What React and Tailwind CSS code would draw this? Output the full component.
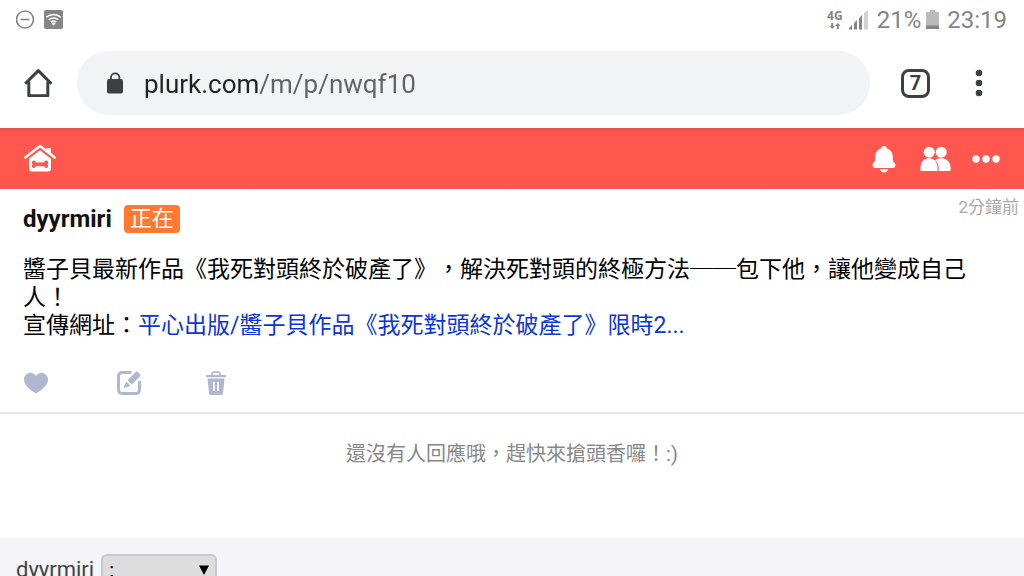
import React from 'react';

function StatusBar() {
  return (
    <div className="flex h-10 shrink-0 items-center justify-between pl-4 pr-[17px] text-[#858585]">
      <div className="flex items-center gap-2">
        {/* Do not disturb */}
        <svg className="h-5 w-5" viewBox="0 0 20 20" fill="none" stroke="currentColor">
          <circle cx="9" cy="9.5" r="8.5" strokeWidth="1.6" />
          <path d="M4.500 9.500h9" strokeWidth="1.6" />
        </svg>
        {/* Wi-Fi */}
        <svg className="h-5 w-5" viewBox="0 0 20 20" fill="none">
          <rect x="0" y="0" width="19" height="19" rx="2" fill="currentColor" />
          <g stroke="#fff" strokeWidth="1.5">
            <path d="M2.2 7.2a11 11 0 0 1 14.6 0" />
            <path d="M4.7 9.7a7.3 7.3 0 0 1 9.6 0" />
            <path d="M6.8 12.2a4.2 4.2 0 0 1 5.4 0" />
          </g>
          <path d="M9.5 15.8l-2-2.3a3 3 0 0 1 4 0z" fill="#fff" />
        </svg>
      </div>
      <div className="flex items-center">
        <div className="flex flex-col items-center">
          <span className="font-['Noto_Sans'] text-xs font-bold leading-3">4G</span>
          <svg className="h-2 w-3" viewBox="0 0 12 8" fill="currentColor">
            <path d="M2.2 1h2v3h1.800L3.200 7 .4 4h1.800z" />
            <path d="M7.800 7h2V4h1.800L8.800 1 6 4h1.800z" />
          </svg>
        </div>
        <svg className="ml-1.5 h-5 w-5" viewBox="0 0 20 20" fill="currentColor">
          <path d="M0 19.5v-1.3L3 15v4.5z" />
          <path d="M5 13.2L8 10v9.5H5z" />
          <path d="M10 8.2L13 5v14.5h-3z" />
          <path d="M15 3.2L19 0v19.5h-4z" fill="#d2d2d2" />
        </svg>
        <span className="ml-2 text-2xl">21%</span>
        <svg className="ml-1 h-5 w-4" viewBox="0 0 16 20">
          <path d="M5 0h5v2h4v14H1V2h4z" fill="#bababa" />
          <path d="M1 15.5h13V19H1z" fill="#858585" />
        </svg>
        <span className="ml-1.5 text-2xl">23:19</span>
      </div>
    </div>
  );
}

function BrowserBar() {
  return (
    <div className="flex h-22 shrink-0 items-center pb-1.5 pl-6 pr-[35px] pt-1">
      <button type="button" aria-label="Home">
        <svg className="h-7 w-7" viewBox="0 0 28 28" fill="none" stroke="#3c4043" strokeWidth="3" strokeLinejoin="round">
          <path d="M1.2 14.8L14.3 1.6l13.1 13.2" />
          <path d="M4.8 12.5v14.2h19V12.5" />
        </svg>
      </button>
      <div className="ml-[25px] flex h-16 flex-1 items-center rounded-full bg-[#f1f3f4] pl-[30px]">
        <svg className="h-6 w-4" viewBox="0 0 16 24">
          <path d="M4 9V6.500a4.200 4.200 0 0 1 8.400 0V9" fill="none" stroke="#3c4043" strokeWidth="1.8" />
          <rect x="0" y="8" width="16" height="14.5" rx="2" fill="#3c4043" />
        </svg>
        {/* the host is darker than the path */}
        <input
          type="text"
          aria-label="Address"
          defaultValue="plurk.com/m/p/nwqf10"
          className="ml-[21px] h-10 min-w-0 flex-1 bg-[linear-gradient(to_right,#202124_115px,#5f6368_115px)] bg-clip-text pt-0.5 text-[26px] leading-8 text-transparent outline-none"
        />
      </div>
      <button
        type="button"
        aria-label="Tabs"
        className="ml-[31px] flex h-[29px] w-[29px] items-center justify-center rounded-lg border-3 border-[#3c4043] text-xl font-bold leading-none text-[#3c4043]"
      >
        7
      </button>
      <button type="button" aria-label="Menu" className="ml-[39px]">
        <svg className="h-7 w-5" viewBox="0 0 20 28" fill="#3c4043">
          <circle cx="10" cy="4" r="3.3" />
          <circle cx="10" cy="14" r="3.3" />
          <circle cx="10" cy="24" r="3.3" />
        </svg>
      </button>
    </div>
  );
}

function SiteNav() {
  return (
    <nav className="flex h-[61px] shrink-0 items-center justify-between bg-linear-to-b from-[#e2524a] to-[#ff574d] to-10% pl-6 pr-6 text-white">
      <a href="#home" aria-label="Plurk">
        <svg className="h-8 w-8" viewBox="0 0 32 32" fill="currentColor">
          <path d="M1.3 14.500L16 3l14.700 11.500" fill="none" stroke="currentColor" strokeWidth="2.4" strokeLinecap="round" strokeLinejoin="round" />
          <path d="M22.600 5h4.200v6.500l-4.200-3.400z" />
          <path d="M16 7.200L27 15.800v9.700q0 3-3 3H8q-3 0-3-3v-9.700z" />
          <g fill="#ff574d">
            <circle cx="9.800" cy="19.600" r="2" />
            <circle cx="9.800" cy="23" r="2" />
            <circle cx="22.200" cy="19.600" r="2" />
            <circle cx="22.200" cy="23" r="2" />
            <rect x="9.500" y="19.400" width="13" height="3.800" />
          </g>
        </svg>
      </a>
      <div className="flex items-center">
        <button type="button" aria-label="Notifications">
          <svg className="h-7 w-6" viewBox="0 0 24 28" fill="currentColor">
            <path d="M12 1a3 3 0 0 1 3 2.4c4 1.3 5.8 4.6 5.8 8.5 0 4 .5 5 2.1 6.3 1.2 1.2.4 4.800-1.700 4.800H2.800C.7 23-.1 19.400 1.100 18.200 2.700 16.900 3.200 15.900 3.200 11.900 3.200 8 5 4.700 9 3.400A3 3 0 0 1 12 1z" />
            <path d="M8 24.200h8q-1.200 3.200-4 3.200t-4-3.200z" />
          </svg>
        </button>
        <button type="button" aria-label="Friends" className="ml-6">
          <svg className="h-7 w-8" viewBox="0 0 32 28" fill="currentColor">
            <path d="M15 15.200q2-2 6-2c6 0 9.600 4 9.600 10V25q0 1-1 1H18.600V22q0-4-3.600-6.800z" />
            <circle cx="21.200" cy="7.200" r="5.500" />
            <path d="M1 26q-.5-.3-.5-1v-2.500c0-5.500 3.500-9.300 8.500-9.300s8.500 3.800 8.500 9.300V26z" />
            <circle cx="9.200" cy="7.200" r="5.500" />
          </svg>
        </button>
        <button type="button" aria-label="More" className="ml-5">
          <svg className="h-7 w-7" viewBox="0 0 28 28" fill="currentColor">
            <circle cx="4" cy="14" r="3.700" />
            <circle cx="14" cy="14" r="3.700" />
            <circle cx="24" cy="14" r="3.700" />
          </svg>
        </button>
      </div>
    </nav>
  );
}

function PlurkPost() {
  return (
    <article className="shrink-0 border-b-2 border-[#e8e8e8] pb-[17px] pt-1">
      <header className="flex items-start justify-between pl-[23px] pr-[5px]">
        <div className="flex items-center gap-3 pt-3">
          <a href="#dyyrmiri" className="text-2xl font-bold leading-7 text-[#111]">dyyrmiri</a>
          <span className="rounded bg-[#ff7a30] px-1.5 text-[22px] leading-7 text-white">正在</span>
        </div>
        <time className="pt-0.5 text-[17px] leading-6 text-[#aaa]">2分鐘前</time>
      </header>

      <div className="mt-[23px] px-[23px] text-[23px] leading-7 text-black [text-spacing-trim:space-all]">
        <p>醬子貝最新作品《我死對頭終於破產了》，解決死對頭的終極方法──包下他，讓他變成自己人！</p>
        <p>
          宣傳網址：
          <a href="#link" className="text-[#0a36d6]">平心出版/醬子貝作品《我死對頭終於破產了》限時2...</a>
        </p>
      </div>

      <div className="mt-[31px] flex items-center pl-6 text-[#afb8d0]">
        <button type="button" aria-label="Like">
          <svg className="h-6 w-6" viewBox="0 0 24 24" fill="currentColor">
            <path d="M12 22.500C7 19.500 0 14.500 0 8.500 0 4.500 3 2 6.500 2 9 2 11 3.200 12 5c1-1.800 3-3 5.500-3C21 2 24 4.500 24 8.500c0 6-7 11-12 14z" />
          </svg>
        </button>
        <button type="button" aria-label="Edit" className="ml-[69px]">
          <svg className="h-6 w-6" viewBox="0 0 24 24" fill="currentColor">
            <path d="M14.500 1.500H5.500q-4 0-4 4v13q0 4 4 4h13q4 0 4-4V10" fill="none" stroke="currentColor" strokeWidth="3" />
            <path d="M19 .7q.8-.7 1.600 0l2.700 2.700q.7.8 0 1.600L14.800 13.500 10.500 9.200z" />
            <path d="M9.300 10.600l4.200 4.100-6.200 2.400q-.8.100-.6-.7z" />
          </svg>
        </button>
        <button type="button" aria-label="Delete" className="ml-[63px]">
          <svg className="h-6 w-6" viewBox="0 0 24 24" fill="currentColor">
            <path d="M8.200 5V2.800q0-1.600 1.600-1.600h4.400q1.600 0 1.600 1.600V5" fill="none" stroke="currentColor" strokeWidth="1.800" />
            <rect x="2" y="4" width="20" height="2.200" rx="1" />
            <path fillRule="evenodd" d="M3.500 7.500h17L19 22q-.2 2-2 2H7q-1.800 0-2-2zM9 11v9h1.800v-9zm4.200 0v9H15v-9z" />
          </svg>
        </button>
      </div>
    </article>
  );
}

function ReplyBar() {
  return (
    <form className="flex flex-1 shrink-0 items-start bg-[#f4f4f9] pl-4 pt-4">
      <div className="flex shrink-0 items-center">
        <label htmlFor="qualifier" className="text-[22px] leading-7 text-[#444]">dyyrmiri</label>
        <div className="relative ml-[7px]">
          <select
            id="qualifier"
            defaultValue=":"
            className="block h-8 w-[116px] appearance-none rounded-md border-2 border-[#c8c8c8] bg-[#ddd] pl-1.5 text-xl leading-7 text-black"
          >
            <option>:</option>
          </select>
          <svg className="pointer-events-none absolute right-2 top-2.5 h-3 w-2.5" viewBox="0 0 10 12">
            <path d="M0 1.500h10L5 11z" />
          </svg>
        </div>
      </div>
    </form>
  );
}

export default function App() {
  return (
    <div className="flex h-screen flex-col overflow-hidden bg-white font-[Roboto,'Noto_Sans_CJK_TC',sans-serif]">
      <StatusBar />
      <BrowserBar />
      <SiteNav />
      <PlurkPost />
      <p className="shrink-0 pb-17 pt-6 text-center text-xl leading-8 text-[#888]">
        還沒有人回應哦，趕快來搶頭香囉！:)
      </p>
      <ReplyBar />
    </div>
  );
}
